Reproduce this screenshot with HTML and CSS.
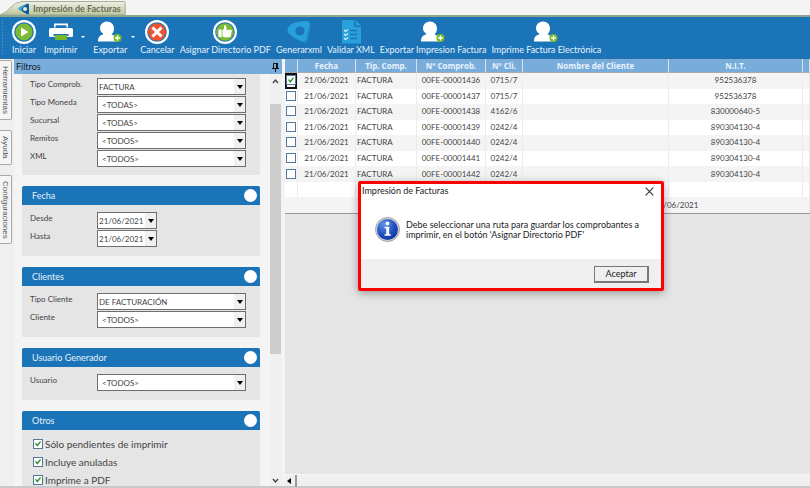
FILE: index.html
```html
<!DOCTYPE html>
<html lang="es">
<head>
<meta charset="utf-8">
<title>Impresión de Facturas</title>
<link rel="stylesheet" href="styles.css">
</head>
<body>
<svg width="0" height="0" class="defs" aria-hidden="true">
  <symbol id="user-plus" viewBox="0 0 24 22">
    <path fill="#fff" d="M9 0.500c4 0 7 3 7 7 0 2.500-1 4.500-2.500 6 3 .8 4.500 2 5.500 3.500v3.500H0C0 16 2 14 5.500 13 3 11.500 2 9.500 2 7.500c0-4 3-7 7-7z"/>
    <path fill="#1c74b8" d="M5 13.500q-2-2-2.600-4-.8 2.500.3 4.700z"/>
    <circle cx="19.500" cy="17" r="4" fill="#76b82a"/>
    <path stroke="#fff" stroke-width="1.300" d="M19.500 14.600v4.800M17.100 17h4.800"/>
  </symbol>
  <symbol id="ring" viewBox="0 0 24 24">
    <circle cx="12" cy="12" r="12" fill="#fff"/>
    <circle cx="12" cy="12" r="9.800" fill="#1c74b8"/>
  </symbol>
</svg>

<header class="tabstrip">
  <div class="doc-tab">
    <svg class="doc-shape" viewBox="0 0 126 15" preserveAspectRatio="none" aria-hidden="true">
      <defs><linearGradient id="tabfill" x1="0" y1="0" x2="0" y2="1"><stop offset="0" stop-color="#eef1e4"/><stop offset="1" stop-color="#b9c79a"/></linearGradient></defs>
      <path d="M0 15Q6 13 10 8Q15 2 22 1.500H124.500Q125.500 1.500 125.500 3V15z" fill="url(#tabfill)" stroke="#a9ad9c"/>
    </svg>
    <svg class="doc-icon" viewBox="0 0 12 12" aria-hidden="true">
      <path fill="#0d5f98" d="M9.500.5Q11 .5 11 2v8.500Q10.500 12 9 11.300L1 6.600Q0 5.500 1.200 4.600z"/>
      <path fill="#3da6dc" d="M9.500.5L1.200 4.600Q0 5.500 1 6.600L4 8V5z"/>
      <circle cx="7" cy="6" r="2" fill="#e9eddc"/>
    </svg>
    <span>Impresión de Facturas</span>
  </div>
</header>

<nav class="toolbar" aria-label="Acciones">
  <button class="tool" type="button">
    <svg width="24" height="24" viewBox="0 0 24 24" aria-hidden="true"><use href="#ring"/><circle cx="12" cy="12" r="8.500" fill="#7dbb35"/><path fill="#fff" d="M9 7.500v9l7.500-4.500z"/></svg>
    Iniciar
  </button>
  <div class="split">
    <button class="tool" type="button">
      <svg width="24" height="24" viewBox="0 0 24 24" aria-hidden="true"><path fill="#fff" d="M5 3.500h14v4h-1.600V5.200H6.600v2.300H5z"/><rect y="8" width="24" height="9" rx="1.500" fill="#fff"/><path fill="#1c74b8" d="M4.500 14h15v2h-15z"/><rect x="6" y="15" width="12" height="5" rx="1" fill="#76b82a"/></svg>
      Imprimir
    </button>
    <span class="drop"></span>
  </div>
  <div class="split">
    <button class="tool" type="button">
      <svg width="24" height="24" aria-hidden="true"><use href="#user-plus"/></svg>
      Exportar
    </button>
    <span class="drop"></span>
  </div>
  <button class="tool" type="button">
    <svg width="24" height="24" viewBox="0 0 24 24" aria-hidden="true"><use href="#ring"/><circle cx="12" cy="12" r="8.800" fill="#f0532d"/><path stroke="#fff" stroke-width="3" d="M7.500 7.500l9 9M16.500 7.500l-9 9"/></svg>
    Cancelar
  </button>
  <button class="tool" type="button">
    <svg width="24" height="24" viewBox="0 0 24 24" aria-hidden="true"><use href="#ring"/><circle cx="12" cy="12" r="8.800" fill="#7dbb35"/><path fill="#fff" d="M5.500 9.500h3.200v7.500H5.500zM9.500 10.500l1.500-2V5.500q1.800-.6 2.300 1.200l.2 3h4.500q1 .4.700 1.600l-1 5q-.4 1-1.500 1H11l-1.500-1z"/></svg>
    Asignar Directorio PDF
  </button>
  <button class="tool" type="button">
    <svg width="24" height="24" viewBox="0 0 24 24" aria-hidden="true"><path fill="#27a0dc" d="M20 1q2.500 0 2.700 2.500.8 7-2.200 17.500-1 3-4 1.700Q6 18 1 12.500 0 10 1 8 3 4.500 6 3.200 12 1 20 1z"/><path fill="#1b87c8" d="M22.700 4q.6 7-2.200 17-1 3-4 1.700-3-1.200-5-2.400l4.500 1q2.500.4 3.200-2z"/><circle cx="13" cy="11" r="4.600" fill="#1c74b8"/></svg>
    Generarxml
  </button>
  <button class="tool" type="button">
    <svg width="24" height="24" viewBox="0 0 24 24" aria-hidden="true"><path fill="#27a0dc" d="M3 0h12l7 7v16.500H3z"/><path fill="#1c74b8" d="M15 0v7h7z"/><path fill="#27a0dc" d="M16.500 0L22 5.500h-5.500z"/><path fill="none" stroke="#1c74b8" stroke-width="1.300" d="M11 10.500h7M11 14.500h7M11 18.500h7"/><path fill="none" stroke="#d6f0fb" stroke-width="1.200" d="M5 10l1.500 1.500L9 9.500M5 14l1.500 1.500L9 13.500M5 18l1.500 1.500L9 17.500"/></svg>
    Validar XML
  </button>
  <button class="tool" type="button">
    <svg width="24" height="24" aria-hidden="true"><use href="#user-plus"/></svg>
    Exportar Impresion Factura
  </button>
  <button class="tool" type="button">
    <svg width="24" height="24" aria-hidden="true"><use href="#user-plus"/></svg>
    Imprime Factura Electrónica
  </button>
</nav>

<div class="workspace">
  <aside class="side-tabs">
    <button type="button">Herramientas</button>
    <button type="button">Ayuda</button>
    <button type="button">Configuraciones</button>
  </aside>

  <section class="filters">
    <h2 class="filters-title">Filtros
      <svg width="7" height="9" viewBox="0 0 7 9" aria-hidden="true"><path fill="none" stroke="#111" d="M1.500 5V.5h4V5M0 5.500h7M3.500 6v3"/><path fill="#111" d="M4 0h2v5H4z"/></svg>
    </h2>
    <div class="filters-view">
      <form class="groups">
        <section class="group first">
          <div class="fields">
            <label for="comprob">Tipo Comprob.</label><span class="combo flush"><select id="comprob"><option>FACTURA</option></select></span>
            <label for="moneda">Tipo Moneda</label><span class="combo"><select id="moneda"><option>&lt;TODAS&gt;</option></select></span>
            <label for="sucursal">Sucursal</label><span class="combo"><select id="sucursal"><option>&lt;TODAS&gt;</option></select></span>
            <label for="remitos">Remitos</label><span class="combo"><select id="remitos"><option>&lt;TODOS&gt;</option></select></span>
            <label for="xml">XML</label><span class="combo"><select id="xml"><option>&lt;TODOS&gt;</option></select></span>
          </div>
        </section>
        <section class="group">
          <h3>Fecha</h3>
          <div class="fields">
            <label for="desde">Desde</label><span class="combo flush date"><select id="desde"><option>21/06/2021</option></select></span>
            <label for="hasta">Hasta</label><span class="combo flush date"><select id="hasta"><option>21/06/2021</option></select></span>
          </div>
        </section>
        <section class="group">
          <h3>Clientes</h3>
          <div class="fields">
            <label for="tipocli">Tipo Cliente</label><span class="combo flush"><select id="tipocli"><option>DE FACTURACIÓN</option></select></span>
            <label for="cliente">Cliente</label><span class="combo"><select id="cliente"><option>&lt;TODOS&gt;</option></select></span>
          </div>
        </section>
        <section class="group">
          <h3>Usuario Generador</h3>
          <div class="fields">
            <label for="usuario">Usuario</label><span class="combo"><select id="usuario"><option>&lt;TODOS&gt;</option></select></span>
          </div>
        </section>
        <section class="group">
          <h3>Otros</h3>
          <div class="checks">
            <label><input type="checkbox" checked>Sólo pendientes de imprimir</label>
            <label><input type="checkbox" checked>Incluye anuladas</label>
            <label><input type="checkbox" checked>Imprime a PDF</label>
          </div>
        </section>
      </form>
      <div class="vscroll" aria-hidden="true">
        <svg width="12" height="14" viewBox="0 0 12 14"><path d="M3 9l2.500-3L8 9" fill="none" stroke="#444" stroke-width="1.400"/></svg>
        <div class="track"><div class="thumb"></div></div>
        <svg width="12" height="12" viewBox="0 0 12 12"><path d="M3 5l2.500 3L8 5" fill="none" stroke="#444" stroke-width="1.400"/></svg>
      </div>
    </div>
  </section>

  <main class="grid-area">
    <table>
      <colgroup><col class="c-check"><col class="c-date"><col class="c-type"><col class="c-num"><col class="c-cli"><col class="c-name"><col class="c-nit"><col></colgroup>
      <thead><tr><th></th><th>Fecha</th><th>Tip. Comp.</th><th>Nº Comprob.</th><th>Nº Cli.</th><th>Nombre del Cliente</th><th>N.I.T.</th><th></th></tr></thead>
      <tbody>
        <tr><td class="current"><input type="checkbox" checked aria-label="00FE-00001436"></td><td>21/06/2021</td><td class="left">FACTURA</td><td>00FE-00001436</td><td>0715/7</td><td></td><td>952536378</td><td></td></tr>
        <tr><td><input type="checkbox" aria-label="00FE-00001437"></td><td>21/06/2021</td><td class="left">FACTURA</td><td>00FE-00001437</td><td>0715/7</td><td></td><td>952536378</td><td></td></tr>
        <tr><td><input type="checkbox" aria-label="00FE-00001438"></td><td>21/06/2021</td><td class="left">FACTURA</td><td>00FE-00001438</td><td>4162/6</td><td></td><td>830000640-5</td><td></td></tr>
        <tr><td><input type="checkbox" aria-label="00FE-00001439"></td><td>21/06/2021</td><td class="left">FACTURA</td><td>00FE-00001439</td><td>0242/4</td><td></td><td>890304130-4</td><td></td></tr>
        <tr><td><input type="checkbox" aria-label="00FE-00001440"></td><td>21/06/2021</td><td class="left">FACTURA</td><td>00FE-00001440</td><td>0242/4</td><td></td><td>890304130-4</td><td></td></tr>
        <tr><td><input type="checkbox" aria-label="00FE-00001441"></td><td>21/06/2021</td><td class="left">FACTURA</td><td>00FE-00001441</td><td>0242/4</td><td></td><td>890304130-4</td><td></td></tr>
        <tr><td><input type="checkbox" aria-label="00FE-00001442"></td><td>21/06/2021</td><td class="left">FACTURA</td><td>00FE-00001442</td><td>0242/4</td><td></td><td>890304130-4</td><td></td></tr>
        <tr><td></td><td></td><td></td><td></td><td></td><td></td><td></td><td></td></tr>
        <tr class="total"><td colspan="8">21/06/2021</td></tr>
      </tbody>
    </table>
    <div class="hscroll" aria-hidden="true"><span class="arrow-left"></span><span class="grip"></span></div>

    <div class="dialog" role="dialog" aria-labelledby="dlg-title">
      <div class="dialog-bar">
        <h2 id="dlg-title">Impresión de Facturas</h2>
        <button type="button" class="close" aria-label="Cerrar"><svg width="9" height="9" viewBox="0 0 9 9"><path d="M.7.700l7.600 7.600M8.300.700L.7 8.300" stroke="#333" stroke-width="1.100"/></svg></button>
      </div>
      <div class="dialog-body">
        <svg width="25" height="25" viewBox="0 0 25 25" aria-hidden="true">
          <defs><radialGradient id="info" cx=".35" cy=".25" r=".9"><stop offset="0" stop-color="#5f92e6"/><stop offset=".6" stop-color="#1d49bd"/><stop offset="1" stop-color="#0e2f96"/></radialGradient></defs>
          <circle cx="12.500" cy="12.500" r="12" fill="#d2d4d8" stroke="#8e9196" stroke-width=".8"/>
          <circle cx="12.500" cy="12.500" r="10.500" fill="url(#info)"/>
          <circle cx="12.500" cy="6.500" r="1.900" fill="#fff"/>
          <path fill="#fff" d="M9.500 9.800h4.700v7.400h1.600v1.500H9.500v-1.500h1.700v-5.900H9.500z"/>
        </svg>
        <p>Debe seleccionar una ruta para guardar los comprobantes a imprimir, en el botón 'Asignar Directorio PDF'</p>
      </div>
      <div class="dialog-foot"><button type="button">Aceptar</button></div>
    </div>
  </main>
</div>
</body>
</html>
```
FILE: styles.css
```css
* { box-sizing: border-box; }
body {
  margin: 0;
  height: 100vh;
  display: flex;
  flex-direction: column;
  overflow: hidden;
  background: #f4f4f4;
  color: #444;
  font: 9px/12px Lato, "Noto Sans", sans-serif;
}
button, select, input { font: inherit; color: inherit; margin: 0; }
h2, h3, p { margin: 0; font-size: inherit; font-weight: normal; }
.defs { position: absolute; }

/* Document tab */
.tabstrip { flex: none; height: 17px; border-bottom: 2px solid #8fa58c; }
.doc-tab {
  position: relative;
  display: inline-flex;
  align-items: center;
  gap: 3px;
  height: 15px;
  padding: 2px 5px 0 18px;
  color: #6b6b5c;
  font-weight: bold;
}
.doc-tab > * { position: relative; }
.doc-tab .doc-shape { position: absolute; inset: 0; width: 100%; height: 100%; }
.doc-icon { width: 12px; height: 12px; }

/* Toolbar */
.toolbar {
  flex: none;
  display: flex;
  align-items: flex-start;
  gap: 5px;
  height: 42px;
  padding: 3px 0 0 12px;
  background: repeating-linear-gradient(#5f9fd0 0 1px, #1c74b8 1px 3px) 2px 3px / 1px 34px no-repeat, #1c74b8;
  border-bottom: 1px solid #2f6ea5;
}
.tool {
  display: flex;
  flex-direction: column;
  align-items: center;
  padding: 0;
  border: 0;
  background: none;
  color: #e6f1fa;
  white-space: nowrap;
}
.split { display: flex; gap: 4px; padding-left: 3px; }
.drop {
  align-self: center;
  border: 2px solid transparent;
  border-top-color: #fff;
}

/* Workspace */
.workspace { flex: 1; min-height: 0; display: flex; border-bottom: 2px solid #c9c9c9; }
.side-tabs {
  flex: none;
  width: 14px;
  display: flex;
  flex-direction: column;
  gap: 10px;
  align-items: flex-start;
  padding-top: 1px;
  background: #efefef;
}
.side-tabs button {
  width: 12px;
  padding: 5px 0;
  border: 1px solid #a8a8a8;
  border-left: 0;
  border-radius: 0 2px 2px 0;
  background: #f5f5f5;
  color: #555;
  font: 8px/11px "Liberation Sans", sans-serif;
  writing-mode: vertical-rl;
}

/* Filters */
.filters { flex: none; width: 268px; display: flex; flex-direction: column; }
.filters-title {
  display: flex;
  justify-content: space-between;
  align-items: center;
  height: 15px;
  padding: 1px 3px 0 2px;
  background: #78addb;
  color: #15202b;
}
.filters-view { flex: 1; min-height: 0; display: flex; }
.groups { flex: 1; padding: 0 10px 0 8px; overflow: hidden; }
.group { margin: 0 0 11px; background: #e5e5e5; }
.group h3 {
  display: flex;
  justify-content: space-between;
  align-items: center;
  height: 19px;
  padding: 0 3px 0 10px;
  border-radius: 2px 2px 0 0;
  background: #1c74b8;
  color: #e6f1fa;
}
.group h3::after { content: ""; width: 13px; height: 13px; border-radius: 50%; background: #fff; }
.fields {
  display: grid;
  grid-template-columns: 67px 1fr;
  row-gap: 1px;
  padding: 7px 14px 9px 8px;
  font-size: 8px;
}
.first .fields { padding-top: 4px; padding-bottom: 8px; }
.combo { position: relative; height: 17px; }
.combo.date { width: 60px; }
.combo select {
  appearance: none;
  width: 100%;
  height: 17px;
  padding: 0 12px 0 4px;
  border: 1px solid #6e6e6e;
  border-radius: 0;
  background: linear-gradient(#f0f0f0, #f0f0f0) right / 11px 100% no-repeat, #fff;
}
.combo.flush select { padding-left: 1px; }
.combo::after {
  content: "";
  position: absolute;
  right: 3px;
  top: 7px;
  border: 3px solid transparent;
  border-top: 4px solid #000;
  border-bottom: 0;
  pointer-events: none;
}
.checks { display: flex; flex-direction: column; padding: 5px 11px; font-size: 10px; }
.checks label { display: flex; align-items: center; gap: 2px; height: 18px; }
input[type="checkbox"] {
  appearance: none;
  flex: none;
  display: grid;
  place-items: center;
  width: 10px;
  height: 10px;
  border: 1px solid #54779b;
  background: #fff;
}
input[type="checkbox"]:checked::after {
  content: "";
  width: 6px;
  height: 6px;
  background: #2f9a35;
  clip-path: polygon(0 45%, 15% 30%, 38% 55%, 85% 0, 100% 15%, 40% 95%);
}
.vscroll { flex: none; width: 12px; display: flex; flex-direction: column; background: #f0f0f0; }
.track { flex: 1; padding-top: 16px; }
.thumb { width: 11px; height: 250px; background: #cdcdcd; }

/* Grid */
.grid-area {
  position: relative;
  flex: 1;
  min-width: 0;
  margin-left: 3px;
  display: flex;
  flex-direction: column;
  justify-content: space-between;
  background: #e5e5e5;
}
table {
  width: 100%;
  height: 155px;
  table-layout: fixed;
  border-collapse: separate;
  border-spacing: 0;
  background: #fff;
  border-bottom: 1px solid #999;
  font-size: 8px;
}
.c-check { width: 13px; }
.c-date { width: 58px; }
.c-type { width: 61px; }
.c-num { width: 69px; }
.c-cli { width: 37px; }
.c-name { width: 146px; }
.c-nit { width: 134px; }
th {
  height: 14px;
  padding: 0;
  background: #78addb;
  border-right: 1px solid #d5e2ee;
  border-bottom: 1px solid #a9a9a9;
  color: #e8f2fb;
  font: bold 8px/12px "Open Sans", sans-serif;
}
td { height: 15px; padding: 0 0 1px; line-height: 12px; text-align: center; border-right: 1px solid #ececec; }
td input { margin: 0 auto; }
td.left { text-align: left; padding-left: 1px; }
tbody tr:nth-child(odd) td { background: #f4f4f4; }
.total td { padding-left: 369px; text-align: left; }
td.current { box-shadow: inset 0 0 0 2px #111; }
.hscroll { display: flex; align-items: center; gap: 4px; height: 12px; border-top: 1px solid #f6f6f6; background: #efefef; }
.arrow-left { border: 3px solid transparent; border-right: 4px solid #000; border-left: 0; margin-left: 2px; }
.grip { width: 2px; height: 12px; background: #999; }

/* Message box */
.dialog {
  position: absolute;
  left: 73px;
  top: 122px;
  width: 306px;
  border: 3px solid #f00;
  border-radius: 2px;
  background: #fff;
  color: #1c1c1c;
  box-shadow: 0 2px 8px rgba(0, 0, 0, .35);
}
.dialog-bar { display: flex; justify-content: space-between; align-items: center; height: 14px; padding: 0 7px 0 1px; }
.close { display: flex; padding: 0; border: 0; background: none; }
.dialog-body { display: flex; gap: 6px; padding: 19px 15px 17px 14px; }
.dialog-body svg { flex: none; }
.dialog-body p { line-height: 10px; padding-top: 3px; }
.dialog-foot { display: flex; justify-content: flex-end; padding: 7px 12px 5px; background: #efefef; }
.dialog-foot button {
  width: 55px;
  height: 17px;
  padding: 0;
  border: 1px solid #777;
  border-right-width: 2px;
  border-bottom-width: 2px;
  background: #efefef;
}
```
